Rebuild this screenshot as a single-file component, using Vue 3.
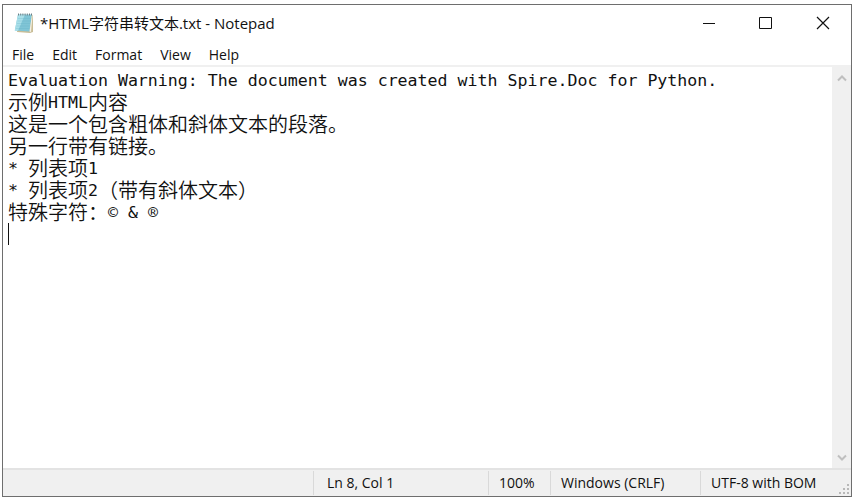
<script setup>
import { ref, computed } from 'vue'

const text = ref([
  'Evaluation Warning: The document was created with Spire.Doc for Python.',
  '示例HTML内容',
  '这是一个包含粗体和斜体文本的段落。',
  '另一行带有链接。',
  '* 列表项1',
  '* 列表项2（带有斜体文本）',
  '特殊字符：© & ®',
  ''
].join('\n'))

const menus = ['File', 'Edit', 'Format', 'View', 'Help']

// Each line is split into half-width and full-width runs, so that both keep to one character grid.
const lines = computed(() =>
  text.value.split('\n').map(line =>
    (line.match(/[\u0000-\u00ff]+|[^\u0000-\u00ff]+/g) || []).map(run => ({
      run,
      half: /^[\u0000-\u00ff]/.test(run)
    }))
  )
)
</script>

<template>
  <div class="desktop">
    <main class="window">
      <header class="titlebar">
        <svg class="app-icon" width="20" height="22" viewBox="0 0 20 22" aria-hidden="true">
          <path d="M5 3 L19 3 L19 20 L16 21 L3 20 Z" fill="#c9bd97" />
          <path d="M4 2.5 L18 2.5 L15.5 19.5 L0.8 18.5 Z" fill="#80c5d6" />
          <path d="M4 2.5 L11 2.5 L4 18.7 L0.8 18.5 Z" fill="#a9dfe9" />
          <path d="M15.5 19.5 L18 2.5 L18.6 3 L17 20 Z" fill="#f4f1e4" />
          <path d="M4 6.5H16.8M3.5 9H16.4M3 11.5H16M2.5 14H15.7M2 16.5H15.3" stroke="#5fadc4" stroke-width="0.7" opacity="0.35" />
          <path d="M4.5 1.5V3.5M6.7 1.5V3.5M8.9 1.5V3.5M11.1 1.5V3.5M13.3 1.5V3.5M15.5 1.5V3.5M17.5 1.5V3.5" stroke="#6c7f86" stroke-width="1" />
        </svg>
        <h1 class="title">*HTML字符串转文本.txt - Notepad</h1>
        <div class="controls">
          <button type="button" aria-label="Minimize">
            <svg width="14" height="14" viewBox="0 0 14 14"><path d="M1 7.5H13" stroke="#111" fill="none" /></svg>
          </button>
          <button type="button" aria-label="Maximize">
            <svg width="14" height="14" viewBox="0 0 14 14"><path d="M0.5 1.5H12.5V12.5H0.5Z" stroke="#111" fill="none" /></svg>
          </button>
          <button type="button" aria-label="Close">
            <svg width="14" height="14" viewBox="0 0 14 14"><path d="M1 1L13 13M13 1L1 13" stroke="#111" stroke-width="1.2" fill="none" /></svg>
          </button>
        </div>
      </header>

      <nav class="menubar">
        <button v-for="m in menus" :key="m" type="button">{{ m }}</button>
      </nav>

      <section class="editor">
        <div class="page">
          <div class="text" aria-hidden="true">
            <div v-for="(runs, i) in lines" :key="i" class="line"><span v-for="(r, j) in runs" :key="j" :class="{ half: r.half }">{{ r.run }}</span><span v-if="i === lines.length - 1" class="caret"></span></div>
          </div>
          <textarea v-model="text" class="input" aria-label="Text editor" spellcheck="false"></textarea>
        </div>
        <div class="scrollbar">
          <button type="button" aria-label="Scroll up">
            <svg width="10" height="8" viewBox="0 0 10 8"><path d="M1 6.5L5 2.5L9 6.5" stroke="#bfbfbf" stroke-width="2" fill="none" /></svg>
          </button>
          <button type="button" aria-label="Scroll down">
            <svg width="10" height="8" viewBox="0 0 10 8"><path d="M1 1.5L5 5.5L9 1.5" stroke="#bfbfbf" stroke-width="2" fill="none" /></svg>
          </button>
        </div>
      </section>

      <footer class="statusbar">
        <span class="cell position">Ln 8, Col 1</span>
        <span class="cell zoom">100%</span>
        <span class="cell ending">Windows (CRLF)</span>
        <span class="cell encoding">UTF-8 with BOM</span>
        <svg class="grip" width="11" height="11" viewBox="0 0 11 11" aria-hidden="true">
          <path d="M8 0h2v2h-2zM4 4h2v2h-2zM8 4h2v2h-2zM0 8h2v2h-2zM4 8h2v2h-2zM8 8h2v2h-2z" fill="#b8b8b8" />
        </svg>
      </footer>
    </main>
  </div>
</template>

<style>
body {
  margin: 0;
  background: #fff;
}
</style>

<style scoped>
.desktop {
  box-sizing: border-box;
  display: flex;
  min-height: 100vh;
  padding: 4px 3px 3px 2px;
  font-family: "Open Sans", "Noto Sans CJK SC", sans-serif;
  font-size: 14px;
  color: #111;
}
.window {
  flex: 1;
  min-width: 0;
  display: flex;
  flex-direction: column;
  border: 1px solid #6e6e6e;
  background: #fff;
}
button {
  display: flex;
  align-items: center;
  justify-content: center;
  margin: 0;
  padding: 0;
  border: 0;
  background: none;
  font: inherit;
  color: inherit;
}
.titlebar {
  display: flex;
  align-items: center;
  height: 36px;
  padding-left: 11px;
}
.app-icon {
  flex: none;
}
.title {
  flex: 1;
  margin: 0 0 0 6px;
  font-size: 15px;
  line-height: 20px;
  font-weight: 400;
  white-space: nowrap;
}
.controls {
  display: flex;
  height: 100%;
}
.controls button {
  width: 57px;
}
.menubar {
  display: flex;
  gap: 18px;
  height: 22px;
  padding: 2px 0 0 9px;
  border-bottom: 2px solid #f0f0f0;
}
.editor {
  flex: 1;
  display: flex;
}
.page {
  flex: 1;
  min-width: 0;
  display: flex;
  position: relative;
}
.text {
  flex: 1;
  min-width: 0;
  padding: 2px 0 0 5px;
  font-family: "Noto Sans CJK SC", sans-serif;
  font-size: 20px;
  font-weight: 350;
  line-height: 22px;
}
.line {
  height: 22px;
  white-space: pre;
}
.half {
  font-family: "DejaVu Sans Mono", monospace;
  font-size-adjust: ch-width 0.5;
  font-weight: 400;
  line-height: 1px;
  vertical-align: 2px;
}
.caret {
  display: inline-block;
  width: 1px;
  height: 22px;
  vertical-align: bottom;
  background: #111;
}
.input {
  position: absolute;
  inset: 0;
  padding: 2px 0 0 5px;
  border: 0;
  outline: 0;
  resize: none;
  overflow: hidden;
  background: transparent;
  color: transparent;
  font-family: "DejaVu Sans Mono", "Noto Sans CJK SC", monospace;
  font-size: 20px;
  font-size-adjust: ch-width 0.5;
  line-height: 22px;
}
.scrollbar {
  display: flex;
  flex-direction: column;
  justify-content: space-between;
  width: 19px;
  background: #f0f0f0;
}
.scrollbar button {
  height: 21px;
}
.statusbar {
  position: relative;
  display: flex;
  justify-content: flex-end;
  height: 24px;
  padding: 1px 0;
  border-top: 2px solid #e3e3e3;
  background: #f0f0f0;
}
.cell {
  box-sizing: border-box;
  padding-left: 10px;
  border-left: 1px solid #d9d9d9;
  line-height: 24px;
  white-space: nowrap;
}
.position {
  width: 175px;
  padding-left: 13px;
}
.zoom {
  width: 62px;
}
.ending {
  width: 150px;
}
.encoding {
  width: 151px;
}
.grip {
  position: absolute;
  right: 1px;
  bottom: 1px;
}
</style>
